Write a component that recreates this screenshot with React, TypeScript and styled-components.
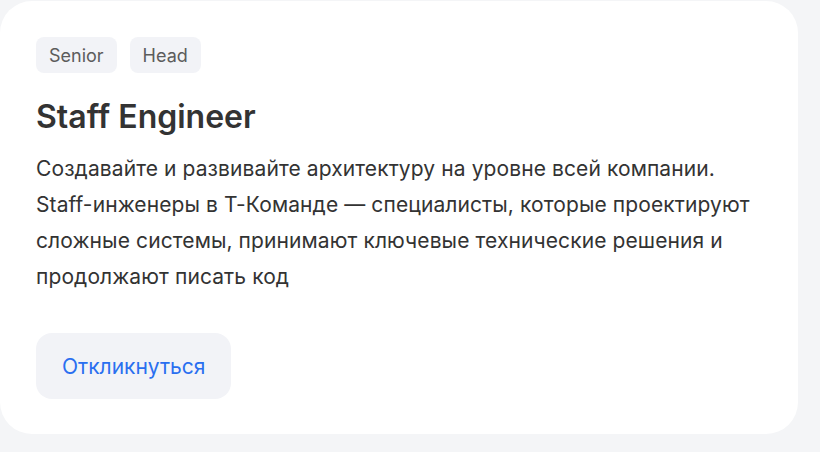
import React from 'react';
import styled, { createGlobalStyle } from 'styled-components';

const GlobalStyle = createGlobalStyle`
  html, body {
    margin: 0;
    padding: 0;
    background: #f4f5f7;
  }
  body {
    font-family: Inter, "Noto Sans", sans-serif;
  }
`;

const tags = ['Senior', 'Head'];

const lines = [
  'Создавайте и развивайте архитектуру на уровне всей компании.',
  'Staff-инженеры в Т-Команде — специалисты, которые проектируют',
  'сложные системы, принимают ключевые технические решения и',
  'продолжают писать код',
];

const App = () => {
  return (
    <>
      <GlobalStyle />
      <Page>
        <Card>
          <TagRow>
            {tags.map((t) => (
              <Tag key={t}>{t}</Tag>
            ))}
          </TagRow>
          <Title>Staff Engineer</Title>
          <Description>
            {lines.map((l) => (
              <Line key={l}>{l}</Line>
            ))}
          </Description>
          <ApplyButton type="button">Откликнуться</ApplyButton>
        </Card>
      </Page>
    </>
  );
};

export default App;

const Page = styled.div`
  width: 820px;
  height: 452px;
  padding-top: 1px;
  box-sizing: border-box;
  background: #f4f5f7;
`;

const Card = styled.div`
  width: 798px;
  height: 433px;
  box-sizing: border-box;
  background: #fff;
  border-radius: 32px;
  padding: 36px 36px 0;
  display: flex;
  flex-direction: column;
  align-items: flex-start;
`;

const TagRow = styled.div`
  display: flex;
  gap: 13px;
`;

const Tag = styled.span`
  height: 36px;
  padding: 0 13px;
  display: flex;
  align-items: center;
  border-radius: 8px;
  background: #f2f3f7;
  color: #5c5c5c;
  font-size: 18px;
`;

const Title = styled.h2`
  margin: 24px 0 0;
  font-size: 32px;
  line-height: 40px;
  font-weight: 600;
  color: #333;
`;

const Description = styled.div`
  margin: 14px 0 0;
  font-size: 21px;
  line-height: 36px;
  letter-spacing: 0.1px;
  color: #333;
`;

const Line = styled.div`
  white-space: nowrap;
`;

const ApplyButton = styled.button`
  margin-top: 38px;
  height: 66px;
  padding: 0 26px;
  border: none;
  border-radius: 16px;
  background: #f2f3f7;
  color: #2a6ff0;
  font-family: inherit;
  font-size: 21px;
  cursor: pointer;
`;
